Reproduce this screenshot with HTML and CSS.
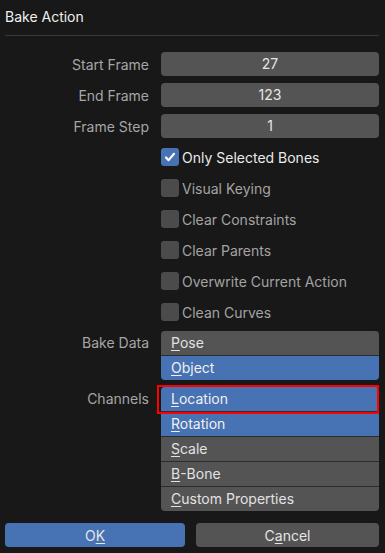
FILE: index.html
```html
<!DOCTYPE html>
<html>

<head>
    <title>Bake Action</title>
    <link rel="stylesheet" href="styles.css">
</head>

<body>
    <div class="dialog">
        <div class="title">Bake Action</div>
        <div class="separator"></div>

        <div class="form">
            <div class="row">
                <span class="label">Start Frame</span>
                <div class="field">27</div>
            </div>
            <div class="row">
                <span class="label">End Frame</span>
                <div class="field">123</div>
            </div>
            <div class="row">
                <span class="label">Frame Step</span>
                <div class="field">1</div>
            </div>

            <div class="row">
                <span class="label"></span>
                <div class="check checked">
                    <span class="box">
                        <svg width="14" height="14" viewBox="0 0 14 14" fill="none" stroke="white" stroke-width="2.2"
                            stroke-linecap="round" stroke-linejoin="round">
                            <path d="M3 7.5l2.6 2.6L11 3.8" />
                        </svg>
                    </span>
                    Only Selected Bones
                </div>
            </div>
            <div class="row">
                <span class="label"></span>
                <div class="check"><span class="box"></span>Visual Keying</div>
            </div>
            <div class="row">
                <span class="label"></span>
                <div class="check"><span class="box"></span>Clear Constraints</div>
            </div>
            <div class="row">
                <span class="label"></span>
                <div class="check"><span class="box"></span>Clear Parents</div>
            </div>
            <div class="row">
                <span class="label"></span>
                <div class="check"><span class="box"></span>Overwrite Current Action</div>
            </div>
            <div class="row">
                <span class="label"></span>
                <div class="check"><span class="box"></span>Clean Curves</div>
            </div>

            <div class="row list-row">
                <span class="label">Bake Data</span>
                <div class="list">
                    <div class="item"><u>P</u>ose</div>
                    <div class="item active"><u>O</u>bject</div>
                </div>
            </div>

            <div class="row list-row channels">
                <span class="label">Channels</span>
                <div class="list">
                    <div class="item active"><u>L</u>ocation</div>
                    <div class="item active"><u>R</u>otation</div>
                    <div class="item"><u>S</u>cale</div>
                    <div class="item"><u>B</u>-Bone</div>
                    <div class="item"><u>C</u>ustom Properties</div>
                </div>
                <div class="highlight"></div>
            </div>
        </div>

        <div class="buttons">
            <button class="primary">O<u>K</u></button>
            <button>C<u>a</u>ncel</button>
        </div>
    </div>
</body>

</html>
```

FILE: styles.css
```css
body {
    margin: 0;
    background-color: #181818;
    font-family: Inter, "Noto Sans", sans-serif;
    font-size: 14px;
    color: #e6e6e6;
}

.dialog {
    width: 385px;
    height: 553px;
    padding: 0 6px 0 5px;
    box-sizing: border-box;
}

.title {
    height: 35px;
    line-height: 34px;
    color: #f0f0f0;
}

.separator {
    height: 1px;
    background-color: #393939;
}

.form {
    display: flex;
    flex-direction: column;
    gap: 7px;
    padding-top: 16px;
}

.row {
    display: grid;
    grid-template-columns: 144px 218px;
    column-gap: 12px;
    align-items: center;
    height: 24px;
    position: relative;
    line-height: 23px;
}

.label {
    text-align: right;
    color: #a6a6a6;
}

.field {
    height: 24px;
    line-height: 23px;
    background-color: #545454;
    border-radius: 4px;
    text-align: center;
    color: #e6e6e6;
}

.check {
    display: flex;
    align-items: center;
    gap: 3px;
    color: #a3a3a3;
}

.check.checked {
    color: #eaeaea;
}

.box {
    width: 18px;
    height: 18px;
    border-radius: 3px;
    background-color: #4b4b4b;
    display: flex;
    align-items: center;
    justify-content: center;
}

.checked .box {
    background-color: #4772b3;
}

.list-row {
    height: auto;
    align-items: start;
}

.list-row .label {
    line-height: 23px;
}

.channels {
    margin-top: 0;
}

.list {
    border-radius: 4px;
    overflow: hidden;
    display: flex;
    flex-direction: column;
    gap: 1px;
    background-color: #2c2c2c;
}

.item {
    height: 24px;
    line-height: 23px;
    padding-left: 10px;
    background-color: #545454;
    color: #e2e2e2;
}

.item.active {
    background-color: #4772b3;
    color: #f0f0f0;
}

u {
    text-underline-offset: 2px;
}

.highlight {
    position: absolute;
    left: 152px;
    top: -2px;
    width: 218px;
    height: 25px;
    border: 2px solid #ff0000;
}

.buttons {
    display: grid;
    grid-template-columns: 180px 183px;
    column-gap: 11px;
    margin-top: 12px;
}

button {
    height: 24px;
    border: none;
    border-radius: 4px;
    background-color: #545454;
    color: #e6e6e6;
    font-family: inherit;
    font-size: 14px;
    padding: 0;
}

button.primary {
    background-color: #4772b3;
}
```
